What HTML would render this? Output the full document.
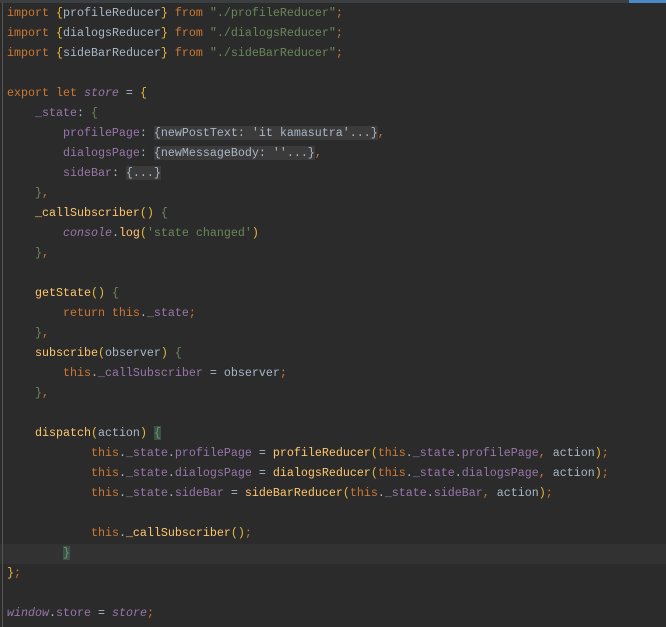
<!DOCTYPE html>
<html><head><meta charset="utf-8"><style>
body{margin:0;width:666px;height:627px;background:#2b2b2b;overflow:hidden;position:relative;font-family:"Liberation Mono",monospace;font-size:11.67px;color:#a9b7c6}
.top{position:absolute;left:0;top:0;width:666px;height:3px;background:#3c3f41}
.blue{position:absolute;left:629px;top:0;width:37px;height:3px;background:#4a88c7}
.gut{position:absolute;left:2px;top:3px;width:1px;height:624px;background:#555}
.cur{position:absolute;left:0;top:544px;width:666px;height:20px;background:#323232}
pre{margin:0;position:absolute;left:7px;top:3px;font:inherit;line-height:20px;white-space:pre}
.k{color:#cc7832}.y{color:#e8ba36}.s{color:#6a8759}.p{color:#9876aa}.f{color:#ffc66d}.g{color:#6a8759}.i{font-style:italic}
.fold{background:#3b3b3b;color:#a9b7c6}
.m{background:#3b514d;color:#6a9955}
</style></head><body>
<div class="top"></div><div class="blue"></div><div class="cur"></div><div class="gut"></div>
<pre><span class="k">import</span> <span class="y">{</span>profileReducer<span class="y">}</span> <span class="k">from</span> <span class="s">"./profileReducer"</span><span class="k">;</span>
<span class="k">import</span> <span class="y">{</span>dialogsReducer<span class="y">}</span> <span class="k">from</span> <span class="s">"./dialogsReducer"</span><span class="k">;</span>
<span class="k">import</span> <span class="y">{</span>sideBarReducer<span class="y">}</span> <span class="k">from</span> <span class="s">"./sideBarReducer"</span><span class="k">;</span>

<span class="k">export let</span> <span class="p i">store</span> = <span class="y">{</span>
    <span class="p">_state</span>: <span class="g">{</span>
        <span class="p">profilePage</span>: <span class="fold">{newPostText: 'it kamasutra'...}</span><span class="k">,</span>
        <span class="p">dialogsPage</span>: <span class="fold">{newMessageBody: ''...}</span><span class="k">,</span>
        <span class="p">sideBar</span>: <span class="fold">{...}</span>
    <span class="g">}</span><span class="k">,</span>
    <span class="f">_callSubscriber</span><span class="y">()</span> <span class="g">{</span>
        <span class="p i">console</span>.<span class="f">log</span><span class="y">(</span><span class="s">'state changed'</span><span class="y">)</span>
    <span class="g">}</span><span class="k">,</span>

    <span class="f">getState</span><span class="y">()</span> <span class="g">{</span>
        <span class="k">return this</span>.<span class="p">_state</span><span class="k">;</span>
    <span class="g">}</span><span class="k">,</span>
    <span class="f">subscribe</span><span class="y">(</span>observer<span class="y">)</span> <span class="g">{</span>
        <span class="k">this</span>.<span class="p">_callSubscriber</span> = observer<span class="k">;</span>
    <span class="g">}</span><span class="k">,</span>

    <span class="f">dispatch</span><span class="y">(</span>action<span class="y">)</span> <span class="m">{</span>
            <span class="k">this</span>.<span class="p">_state</span>.<span class="p">profilePage</span> = <span class="f">profileReducer</span><span class="y">(</span><span class="k">this</span>.<span class="p">_state</span>.<span class="p">profilePage</span><span class="k">,</span> action<span class="y">)</span><span class="k">;</span>
            <span class="k">this</span>.<span class="p">_state</span>.<span class="p">dialogsPage</span> = <span class="f">dialogsReducer</span><span class="y">(</span><span class="k">this</span>.<span class="p">_state</span>.<span class="p">dialogsPage</span><span class="k">,</span> action<span class="y">)</span><span class="k">;</span>
            <span class="k">this</span>.<span class="p">_state</span>.<span class="p">sideBar</span> = <span class="f">sideBarReducer</span><span class="y">(</span><span class="k">this</span>.<span class="p">_state</span>.<span class="p">sideBar</span><span class="k">,</span> action<span class="y">)</span><span class="k">;</span>

            <span class="k">this</span>.<span class="f">_callSubscriber</span><span class="y">()</span><span class="k">;</span>
        <span class="m">}</span>
<span class="y">}</span><span class="k">;</span>

<span class="p i">window</span>.<span class="p">store</span> = <span class="p i">store</span><span class="k">;</span></pre>
</body></html>
